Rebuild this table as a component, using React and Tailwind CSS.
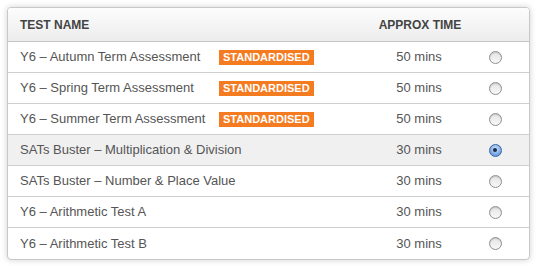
const tests = [
  { name: "Y6 – Autumn Term Assessment", standardised: true, time: "50 mins" },
  { name: "Y6 – Spring Term Assessment", standardised: true, time: "50 mins" },
  { name: "Y6 – Summer Term Assessment", standardised: true, time: "50 mins" },
  { name: "SATs Buster – Multiplication & Division", time: "30 mins", selected: true },
  { name: "SATs Buster – Number & Place Value", time: "30 mins" },
  { name: "Y6 – Arithmetic Test A", time: "30 mins" },
  { name: "Y6 – Arithmetic Test B", time: "30 mins" },
];

function Radio({ checked }) {
  if (checked) {
    return (
      <span className="flex h-[13px] w-[13px] items-center justify-center rounded-full border border-[#3a64a8] bg-[radial-gradient(circle_at_50%_35%,#cfe3fb,#6fa0e0_70%,#4d7fcc)]">
        <span className="h-[4px] w-[4px] rounded-full bg-[#1b2a44]" />
      </span>
    );
  }
  return (
    <span className="block h-[13px] w-[13px] rounded-full border border-[#8f8f8f] bg-[linear-gradient(#e4e4e4,#f8f8f8)] shadow-[inset_0_1px_1px_rgba(0,0,0,0.15)]" />
  );
}

export default function App() {
  return (
    <div className="h-[266px] w-[538px] bg-white p-[7px] pb-0 font-['Liberation_Sans',Arial,sans-serif]">
      <div className="w-[523px] overflow-hidden rounded-[4px] border border-[#c8c8c8] bg-white shadow-[0_0_6px_rgba(0,0,0,0.18)]">
        <div className="flex h-[34px] items-center border-b border-[#c4c4c4] bg-[linear-gradient(#fdfdfd,#ececec)] text-[12px] font-bold text-[#444]">
          <div className="w-[369px] pl-[12px]">TEST NAME</div>
          <div className="w-[86px] text-center">APPROX TIME</div>
        </div>
        {tests.map((test, i) => (
          <div
            key={test.name}
            className={`flex h-[31px] items-center text-[13px] text-[#555] ${i < tests.length - 1 ? "border-b border-[#cfcfcf]" : ""} ${test.selected ? "bg-[#f0f0f0]" : ""}`}
          >
            <div className="flex w-[369px] items-center pl-[12px]">
              <span className="w-[199px] shrink-0 whitespace-nowrap">{test.name}</span>
              {test.standardised ? (
                <span className="bg-[#f47b20] px-[4px] text-[11px] font-bold leading-[15px] text-white">
                  STANDARDISED
                </span>
              ) : null}
            </div>
            <div className="w-[84px] text-center">{test.time}</div>
            <div className="flex flex-1 justify-center">
              <Radio checked={test.selected} />
            </div>
          </div>
        ))}
      </div>
    </div>
  );
}
